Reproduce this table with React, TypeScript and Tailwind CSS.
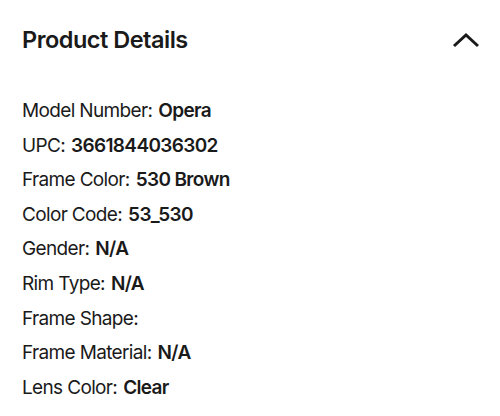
const details: [string, string][] = [
  ['Model Number:', 'Opera'],
  ['UPC:', '3661844036302'],
  ['Frame Color:', '530 Brown'],
  ['Color Code:', '53_530'],
  ['Gender:', 'N/A'],
  ['Rim Type:', 'N/A'],
  ['Frame Shape:', ''],
  ['Frame Material:', 'N/A'],
  ['Lens Color:', 'Clear'],
];

export default function App() {
  return (
    <div className="w-[500px] h-[416px] bg-white text-[#1a1a1a] px-[22px] font-['Inter',sans-serif] overflow-hidden">
      <div className="flex items-center justify-between h-[80px]">
        <h2 className="text-[23.5px] font-semibold tracking-[-0.5px]">Product Details</h2>
        <svg width="30" height="18" viewBox="0 0 30 18" className="mr-[-3px]">
          <path d="M3 15 L15 4 L27 15" fill="none" stroke="#1a1a1a" strokeWidth="3" />
        </svg>
      </div>
      <ul className="mt-[14px] flex flex-col">
        {details.map(([label, value]) => (
          <li key={label} className="h-[34.6px] flex items-center text-[19px] tracking-[-0.65px]">
            <span className="font-normal">{label}</span>
            {value && <span className="ml-[6px] font-semibold">{value}</span>}
          </li>
        ))}
      </ul>
    </div>
  );
}
